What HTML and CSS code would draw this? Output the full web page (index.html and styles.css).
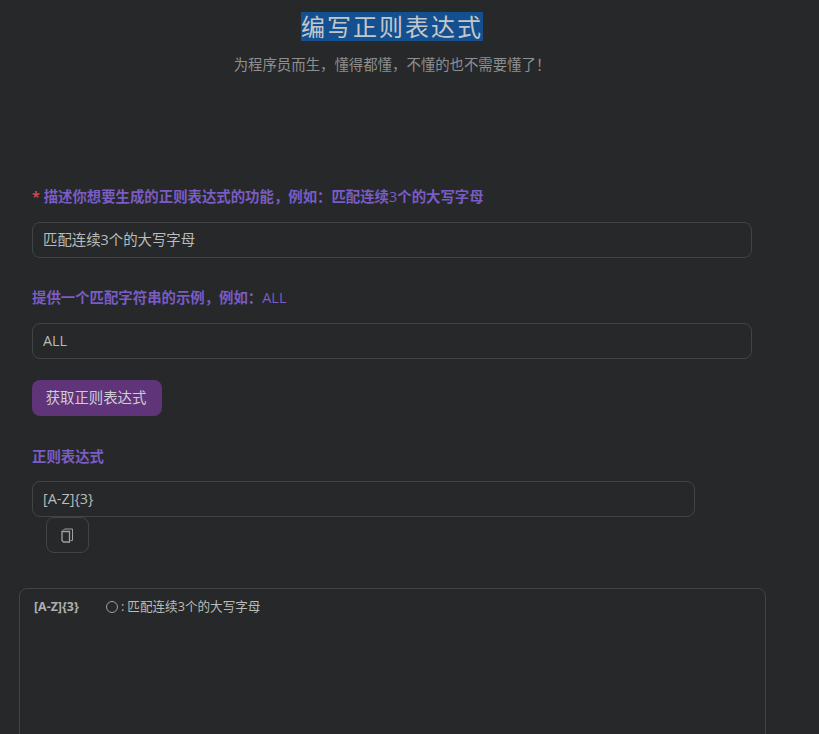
FILE: index.html
```html
<!DOCTYPE html>
<html>

<head>
	<meta charset="utf-8">
	<title>编写正则表达式</title>
	<link rel="stylesheet" href="styles.css">
</head>

<body>

	<div class="wrapper">
		<div class="head">
			<h1 class="title"><span class="mark">编写正则表达式</span></h1>
			<p class="sub">为程序员而生，懂得都懂，不懂的也不需要懂了！</p>
		</div>

		<div class="form">
			<div class="label first"><span class="star">*</span> 描述你想要生成的正则表达式的功能，例如：匹配连续<span class="thin">3</span>个的大写字母</div>
			<div class="field">匹配连续3个的大写字母</div>

			<div class="label second">提供一个匹配字符串的示例，例如：<span class="thin">ALL</span></div>
			<div class="field">ALL</div>

			<div class="btn">获取正则表达式</div>

			<div class="label third">正则表达式</div>
			<div class="field short">[A-Z]{3}</div>
			<div class="copy">
				<svg width="13" height="15" viewBox="0 0 13 15" fill="none" stroke="#a0a0a0">
					<path d="M2 2.500l1.500-1.500h8v11.500h-2" />
					<path d="M1 3.500h7.500v10.500h-6l-1.500-1.500z" stroke-width="1.300" />
				</svg>
			</div>
		</div>

		<div class="result">
			<span class="code">[A-Z]{3}</span>
			<span class="circle"></span>
			<span class="desc">:</span>
			<span class="text">匹配连续3个的大写字母</span>
		</div>
	</div>

</body>

</html>
```

FILE: styles.css
```css
* {
	padding: 0px;
	margin: 0px;
	box-sizing: border-box;
}

html,
body {
	height: 100%;
	overflow: hidden;
}

body {
	background-color: #26282a;
	color: #b9bcb8;
	font-family: "Open Sans", "Noto Sans CJK SC", sans-serif;
	font-size: 14.4px;
}

.wrapper {
	width: 784px;
}

.head {
	text-align: center;
	padding-top: 12px;
}

.title {
	font-size: 24px;
	font-weight: normal;
	letter-spacing: 2px;
	line-height: 29px;
	color: #c3c7cb;
}

.mark {
	display: inline-block;
	background-color: #14508f;
}

.sub {
	margin-top: 14px;
	line-height: 20px;
	color: #8f8f8f;
}

.form {
	padding: 0px 32px;
}

.label {
	font-weight: 600;
	line-height: 20px;
	color: #7a5cc4;
}

.thin {
	font-weight: 400;
}

.first {
	margin-top: 112px;
	margin-bottom: 15px;
}

.second {
	margin-top: 30px;
	margin-bottom: 15px;
}

.third {
	margin-top: 31px;
	margin-bottom: 14px;
}

.star {
	color: #e0484f;
}

.field {
	width: 720px;
	height: 36px;
	line-height: 34px;
	padding: 0px 10px;
	border: 1px solid #424548;
	border-radius: 8px;
}

.short {
	width: 663px;
}

.btn {
	width: 130px;
	height: 36px;
	margin-top: 21px;
	padding-right: 2px;
	line-height: 36px;
	text-align: center;
	color: #d0ccd4;
	background-color: #5f3478;
	border-radius: 8px;
}

.copy {
	display: flex;
	align-items: center;
	justify-content: center;
	width: 43px;
	height: 36px;
	margin-left: 14px;
	border: 1px solid #424548;
	border-radius: 8px;
}

.result {
	display: flex;
	align-items: flex-start;
	width: 747px;
	height: 300px;
	margin: 35px 0px 0px 19px;
	padding: 8px 14px 0px;
	line-height: 20px;
	font-size: 12.6px;
	border: 1px solid #424548;
	border-radius: 8px;
}

.code {
	width: 72px;
	font-weight: 700;
	font-size: 12.4px;
	color: #aeb0ae;
}

.circle {
	width: 12px;
	height: 12px;
	margin-top: 4px;
	border: 1px solid #a0a0a0;
	border-radius: 50%;
}

.desc {
	margin-left: 3px;
}

.text {
	margin-left: 3px;
}
```
